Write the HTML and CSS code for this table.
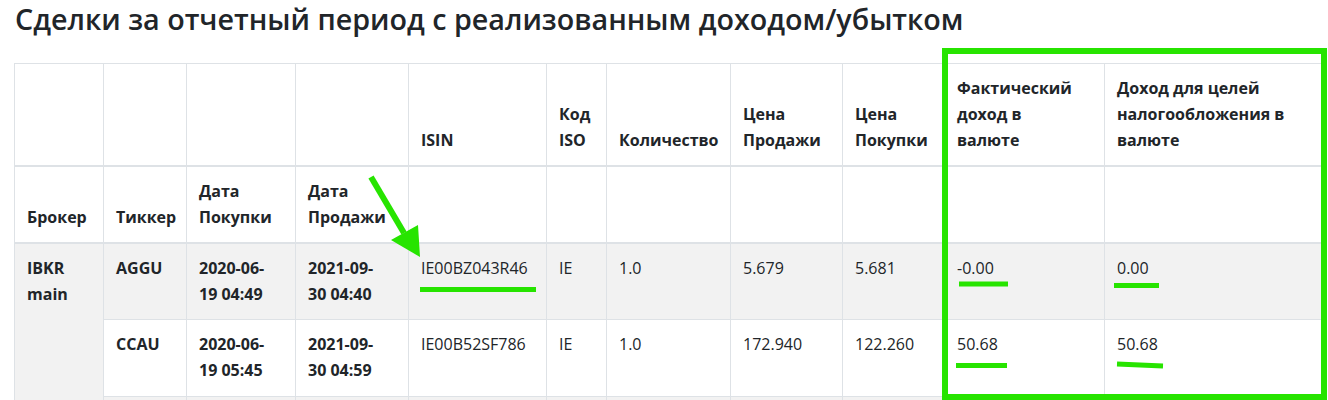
FILE: index.html
```html
<!DOCTYPE html>
<html lang="ru">
<head>
<meta charset="UTF-8" />
<title>Сделки за отчетный период</title>
<link rel="stylesheet" href="styles.css">
</head>
<body>
<div class="page">
<h3 class="title">Сделки за отчетный период с реализованным доходом/убытком</h3>

<table class="deals">
    <colgroup>
        <col style="width: 89px">
        <col style="width: 83px">
        <col style="width: 109px">
        <col style="width: 113px">
        <col style="width: 138px">
        <col style="width: 60px">
        <col style="width: 124px">
        <col style="width: 112px">
        <col style="width: 102px">
        <col style="width: 160px">
        <col style="width: 218px">
    </colgroup>
    <thead>
        <tr>
            <th></th>
            <th></th>
            <th></th>
            <th></th>
            <th>ISIN</th>
            <th>Код<br>ISO</th>
            <th>Количество</th>
            <th>Цена<br>Продажи</th>
            <th>Цена<br>Покупки</th>
            <th>Фактический<br>доход в<br>валюте</th>
            <th>Доход для целей<br>налогообложения в<br>валюте</th>
        </tr>
        <tr>
            <th>Брокер</th>
            <th>Тиккер</th>
            <th>Дата<br>Покупки</th>
            <th>Дата<br>Продажи</th>
            <th></th>
            <th></th>
            <th></th>
            <th></th>
            <th></th>
            <th></th>
            <th></th>
        </tr>
    </thead>
    <tbody>
        <tr class="odd">
            <th rowspan="3">IBKR<br>main</th>
            <th>AGGU</th>
            <th>2020-06-<br>19 04:49</th>
            <th>2021-09-<br>30 04:40</th>
            <td>IE00BZ043R46</td>
            <td>IE</td>
            <td>1.0</td>
            <td>5.679</td>
            <td>5.681</td>
            <td>-0.00</td>
            <td>0.00</td>
        </tr>
        <tr>
            <th>CCAU</th>
            <th>2020-06-<br>19 05:45</th>
            <th>2021-09-<br>30 04:59</th>
            <td>IE00B52SF786</td>
            <td>IE</td>
            <td>1.0</td>
            <td>172.940</td>
            <td>122.260</td>
            <td>50.68</td>
            <td>50.68</td>
        </tr>
        <tr class="odd">
            <th></th>
            <th></th>
            <th></th>
            <td></td>
            <td></td>
            <td></td>
            <td></td>
            <td></td>
            <td></td>
            <td></td>
        </tr>
    </tbody>
</table>

<svg class="marks" width="1328" height="400" viewBox="0 0 1328 400">
    <rect x="945" y="51" width="379" height="346" fill="none" stroke="#27e400" stroke-width="6"/>
    <line x1="371" y1="177" x2="404" y2="233" stroke="#27e400" stroke-width="6"/>
    <polygon points="391,240 418,225 420,257" fill="#27e400"/>
    <line x1="420" y1="289.5" x2="536" y2="289.5" stroke="#27e400" stroke-width="5"/>
    <line x1="959" y1="284" x2="1008" y2="284" stroke="#27e400" stroke-width="5"/>
    <line x1="1114" y1="285.5" x2="1159" y2="285.5" stroke="#27e400" stroke-width="5"/>
    <line x1="956" y1="365.5" x2="1007" y2="365.5" stroke="#27e400" stroke-width="5"/>
    <line x1="1117" y1="364" x2="1163" y2="366" stroke="#27e400" stroke-width="5"/>
</svg>
</div>
</body>
</html>
```

FILE: styles.css
```css
body {
    margin: 0;
    font-family: "Open Sans", "Noto Sans", sans-serif;
    font-size: 16px;
    line-height: 1.6;
    color: #212529;
    background: #fff;
    overflow: hidden;
}
.page {
    position: relative;
    padding: 0 6px 0 14px;
}
.title {
    margin: 0 0 26px 1px;
    padding-top: 0;
    font-size: 28.7px;
    font-weight: 600;
    line-height: 1.3;
}
.deals {
    width: 1308px;
    table-layout: fixed;
    border-collapse: collapse;
}
.deals th,
.deals td {
    padding: 12px;
    border: 1px solid #dee2e6;
    text-align: left;
    vertical-align: top;
}
.deals th {
    font-weight: 700;
}
.deals td {
    font-weight: 400;
}
.deals thead th {
    vertical-align: bottom;
    border-bottom: 2px solid #dee2e6;
}
.deals tbody tr.odd {
    background: #f2f2f2;
}
.marks {
    position: absolute;
    top: 0;
    left: 0;
    pointer-events: none;
}
```
